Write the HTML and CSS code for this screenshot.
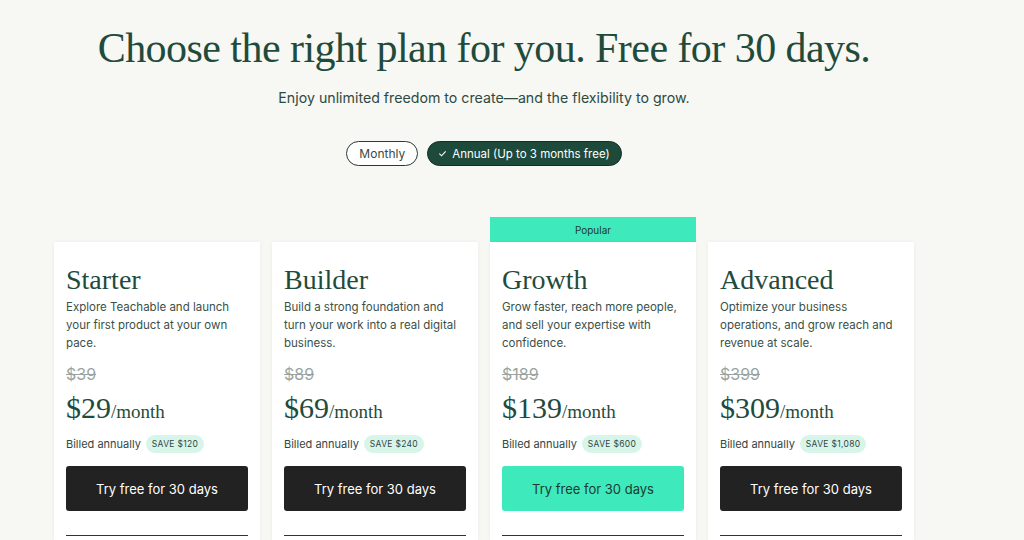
FILE: index.html
```html
<!DOCTYPE html>
<html>
<head>
<meta charset="utf-8">
<link rel="stylesheet" href="styles.css">
</head>
<body>
<div class="page">
  <h1 class="title">Choose the right plan for you. Free for 30 days.</h1>
  <p class="subtitle">Enjoy unlimited freedom to create—and the flexibility to grow.</p>
  <div class="toggle">
    <span class="pill pill-outline">Monthly</span>
    <span class="pill pill-active"><svg class="check" width="9" height="9" viewBox="0 0 10 10"><path d="M1.5 5.2 L4 7.6 L8.5 2.6" fill="none" stroke="#fff" stroke-width="1.2"/></svg>Annual (Up to 3 months free)</span>
  </div>
  <div class="plans">
    <div class="plan">
      <div class="banner-space"></div>
      <div class="card">
        <h2 class="name">Starter</h2>
        <p class="desc">Explore Teachable and launch your first product at your own pace.</p>
        <div class="old">$39</div>
        <div class="price">$29<span class="per">/month</span></div>
        <div class="billed">Billed annually <span class="save">SAVE $120</span></div>
        <button class="cta">Try free for 30 days</button>
        <div class="rule"></div>
      </div>
    </div>
    <div class="plan">
      <div class="banner-space"></div>
      <div class="card">
        <h2 class="name">Builder</h2>
        <p class="desc">Build a strong foundation and turn your work into a real digital business.</p>
        <div class="old">$89</div>
        <div class="price">$69<span class="per">/month</span></div>
        <div class="billed">Billed annually <span class="save">SAVE $240</span></div>
        <button class="cta">Try free for 30 days</button>
        <div class="rule"></div>
      </div>
    </div>
    <div class="plan">
      <div class="banner">Popular</div>
      <div class="card">
        <h2 class="name">Growth</h2>
        <p class="desc">Grow faster, reach more people, and sell your expertise with confidence.</p>
        <div class="old">$189</div>
        <div class="price">$139<span class="per">/month</span></div>
        <div class="billed">Billed annually <span class="save">SAVE $600</span></div>
        <button class="cta cta-green">Try free for 30 days</button>
        <div class="rule"></div>
      </div>
    </div>
    <div class="plan">
      <div class="banner-space"></div>
      <div class="card">
        <h2 class="name">Advanced</h2>
        <p class="desc">Optimize your business operations, and grow reach and revenue at scale.</p>
        <div class="old">$399</div>
        <div class="price">$309<span class="per">/month</span></div>
        <div class="billed">Billed annually <span class="save">SAVE $1,080</span></div>
        <button class="cta">Try free for 30 days</button>
        <div class="rule"></div>
      </div>
    </div>
  </div>
</div>
</body>
</html>
```
FILE: styles.css
```css
* { box-sizing: border-box; }
html, body { margin: 0; padding: 0; }
body {
  background: #f7f7f3;
  font-family: "Inter", "Liberation Sans", sans-serif;
  color: #2d4a3f;
  overflow: hidden;
  height: 540px;
}
.page {
  width: 860px;
  margin-left: 54px;
  padding-top: 24px;
  display: flex;
  flex-direction: column;
  align-items: center;
}
.title {
  margin: 0;
  font-family: "Liberation Serif", serif;
  font-weight: 400;
  font-size: 42px;
  line-height: 48px;
  color: #1f4b3c;
  letter-spacing: -0.55px;
}
.subtitle {
  margin: 16px 0 0;
  font-size: 14.2px;
  line-height: 20px;
  color: #2d4a3f;
}
.toggle {
  margin-top: 33px;
  display: flex;
  gap: 9px;
}
.pill {
  height: 25px;
  border-radius: 13px;
  display: flex;
  align-items: center;
  font-size: 12px;
  padding: 0 12px;
}
.pill-outline {
  border: 1px solid #2b3a34;
  color: #3a4a44;
  background: #fff;
}
.pill-active {
  background: #1d4a3b;
  color: #fff;
  border: 1px solid #122e25;
  padding: 0 11px 0 10px;
  font-size: 11.5px;
}
.check { margin-right: 5px; }
.plans {
  margin-top: 51px;
  align-self: stretch;
  display: grid;
  grid-template-columns: repeat(4, 1fr);
  gap: 12px;
}
.plan { display: flex; flex-direction: column; }
.banner, .banner-space { height: 25px; }
.banner {
  background: #3ee9bc;
  color: #1d3b30;
  font-size: 10px;
  display: flex;
  align-items: center;
  justify-content: center;
}
.card {
  background: #fff;
  box-shadow: 0 0 4px rgba(0,0,0,0.05);
  padding: 22px 12px 0;
  height: 300px;
}
.name {
  margin: 0;
  font-family: "Liberation Serif", serif;
  font-weight: 400;
  font-size: 28px;
  line-height: 32px;
  color: #1f4b3c;
}
.desc {
  margin: 2px 0 0;
  font-size: 11.5px;
  line-height: 18px;
  color: #3b5048;
  height: 54px;
}
.old {
  margin-top: 12px;
  font-size: 16px;
  color: #9aa3a0;
  text-decoration: line-through;
  line-height: 20px;
}
.price {
  margin-top: 9px;
  font-family: "Liberation Serif", serif;
  font-size: 30px;
  line-height: 30px;
  color: #1f4b3c;
}
.per { font-size: 19px; }
.billed {
  margin-top: 8px;
  font-size: 11px;
  color: #33463f;
  display: flex;
  align-items: center;
  gap: 5px;
}
.save {
  background: #d8f5ea;
  color: #33463f;
  font-size: 8.5px;
  letter-spacing: 0.3px;
  border-radius: 9px;
  padding: 4px 6px;
}
.cta {
  display: block;
  width: 100%;
  height: 45px;
  margin-top: 13px;
  border: 0;
  border-radius: 3px;
  background: #222222;
  color: #fff;
  font-family: "Inter", "Liberation Sans", sans-serif;
  font-size: 13px;
}
.cta-green { background: #3ee9bc; color: #1e3a30; }
.rule {
  margin-top: 24px;
  height: 1px;
  background: #333;
}
```
